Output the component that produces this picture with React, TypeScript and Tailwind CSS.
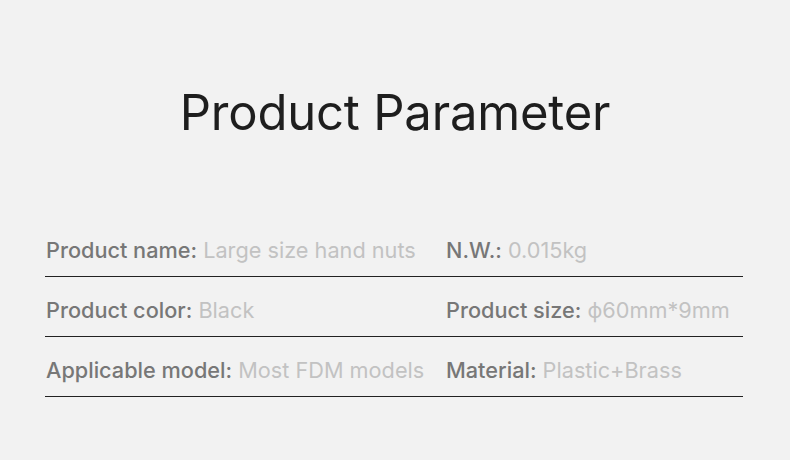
import React from "react";

const rows: [string, string, string, string][] = [
  ["Product name:", "Large size hand nuts", "N.W.:", "0.015kg"],
  ["Product color:", "Black", "Product size:", "ϕ60mm*9mm"],
  ["Applicable model:", "Most FDM models", "Material:", "Plastic+Brass"],
];

export default function App() {
  return (
    <div
      className="w-[790px] h-[460px] bg-[#f2f2f2] flex flex-col"
      style={{ fontFamily: "Inter, 'Liberation Sans', Arial, sans-serif" }}
    >
      <h1 className="text-center text-[49px] leading-none text-[#1e1e1e] pt-[88px] tracking-[-0.2px]">
        Product Parameter
      </h1>
      <div className="mt-[80px] mx-[45px] w-[698px] flex flex-col">
        {rows.map((r, i) => (
          <div key={i} className="h-[60px] flex items-end border-b border-[#222] pb-[14px] text-[21.7px] leading-none">
            <div className="w-[401px] pl-[1px]">
              <span className="text-[#777] font-medium">{r[0]}</span>{" "}
              <span className="text-[#c2c2c2]">{r[1]}</span>
            </div>
            <div>
              <span className="text-[#777] font-medium">{r[2]}</span>{" "}
              <span className="text-[#c2c2c2]">{r[3]}</span>
            </div>
          </div>
        ))}
      </div>
    </div>
  );
}
